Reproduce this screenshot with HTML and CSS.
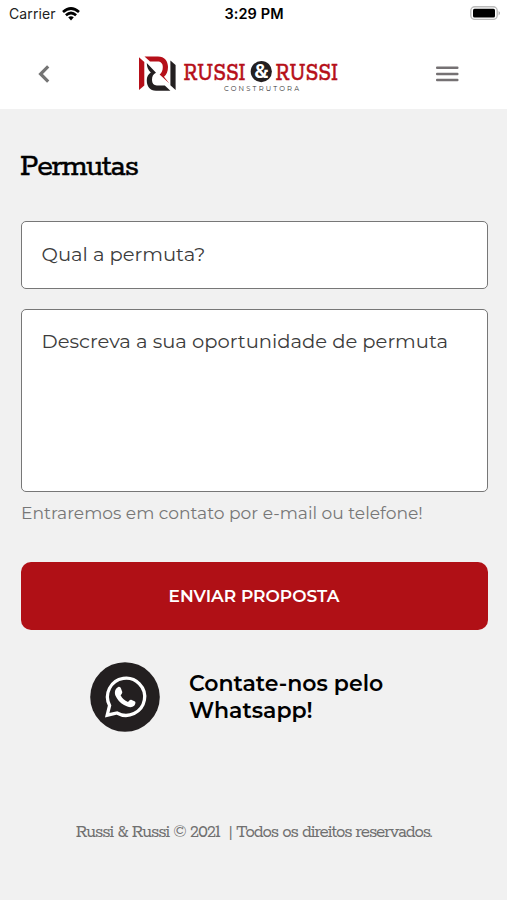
FILE: index.html
```html
<!DOCTYPE html>
<html lang="pt-BR">
<head>
    <meta charset="UTF-8">
    <meta name="viewport" content="width=device-width, initial-scale=1.0">
    <title>Permutas</title>
    <link rel="stylesheet" href="styles.css">
</head>
<body>

    <!-- Status bar -->
    <div class="status-bar">
        <div class="carrier">
            <span>Carrier</span>
            <svg width="18" height="14" viewBox="0 0 18 14" fill="none" stroke="#000" stroke-width="2.7">
                <path d="M1 5 Q9 -2 17 5"/>
                <path d="M3.9 8.2 Q9 3.8 14.1 8.2"/>
                <path d="M6.2 10.3 Q9 8.2 11.8 10.3 L9 13.4 Z" fill="#000" stroke="none"/>
            </svg>
        </div>
        <span class="time">3:29 PM</span>
        <svg class="battery" width="31" height="15" viewBox="0 0 31 15">
            <rect x="0.8" y="0.8" width="26.4" height="12.6" rx="4" fill="#fff" stroke="#bbb" stroke-width="1.4"/>
            <rect x="3" y="2.8" width="22" height="8.6" rx="1.5" fill="#000"/>
            <path d="M28.6 5 Q31.4 7 28.6 9.4 Z" fill="#aaa"/>
        </svg>
    </div>

    <!-- Header -->
    <header class="header">
        <button class="icon-btn" aria-label="Voltar">
            <svg width="12" height="18" viewBox="0 0 12 18" fill="none" stroke="#757575" stroke-width="3.2">
                <path d="M10.2 1.4 L2.6 9 L10.2 16.6"/>
            </svg>
        </button>
        <svg class="logo" width="210" height="40" viewBox="0 0 210 40">
            <path d="M1 3.2 L6.3 8 V31.5 L1 36 Z" fill="#b60f19"/>
            <path d="M6.5 2.4 H20 C26.5 2.4 30 7 30 13 C30 17.5 28.6 20.5 26 22.8 L31.4 29.6 L21.6 20.6 C23.6 19 24.8 16.8 24.8 13 C24.8 9.6 22.8 7.6 19.4 7.6 H12 Z" fill="#b60f19"/>
            <path d="M8.8 9 L18 18.8 C15 20 14 22.6 14 26 C14 29.4 15.8 31.4 18.8 31.4 H26.8 L32.4 36.8 H18 C11.8 36.8 8.8 32.4 8.8 26.5 C8.8 22.8 10.2 20.2 12.8 18.6 C10 15.8 8.8 12.8 8.8 9 Z" fill="#231f20"/>
            <path d="M32.4 6.4 L37.6 11 V36 L32.4 31.2 Z" fill="#231f20"/>
            <text class="logo-name" x="45.5" y="26.2" textLength="62" lengthAdjust="spacingAndGlyphs">RUSSI</text>
            <circle cx="123.3" cy="17.6" r="10.6" fill="#231f20"/>
            <text class="logo-amp" x="123.3" y="24.4" text-anchor="middle">&amp;</text>
            <text class="logo-name" x="137.5" y="26.2" textLength="62.5" lengthAdjust="spacingAndGlyphs">RUSSI</text>
            <text class="logo-sub" x="86" y="36.8" textLength="75">CONSTRUTORA</text>
        </svg>
        <button class="icon-btn" aria-label="Menu">
            <svg width="23" height="16" viewBox="0 0 23 16" fill="#757173">
                <rect x="0" y="0.6" width="22.5" height="2.5" rx="1"/>
                <rect x="0" y="6.7" width="22.5" height="2.5" rx="1"/>
                <rect x="0" y="12.8" width="22.5" height="2.5" rx="1"/>
            </svg>
        </button>
    </header>

    <main class="content">
        <h1>Permutas</h1>

        <form>
            <input class="field" type="text" placeholder="Qual a permuta?">
            <textarea class="field" placeholder="Descreva a sua oportunidade de permuta"></textarea>
            <p class="hint">Entraremos em contato por e-mail ou telefone!</p>
            <button class="submit-btn" type="button">ENVIAR PROPOSTA</button>
        </form>

        <!-- Whatsapp contact -->
        <div class="whatsapp">
            <svg width="70" height="70" viewBox="0 0 70 70">
                <circle cx="35" cy="35" r="34.8" fill="#231f20"/>
                <path d="M17.2 53.2 L19.6 43.4 A18.6 18.6 0 1 1 27 51 Z" fill="none" stroke="#fff" stroke-width="3.3"/>
                <path d="M28.2 25 C29.6 24.4 30.5 25.2 31 26.6 L32.2 29.8 C32.6 31.2 31.6 32.2 30.6 33.3 C32.2 36.4 34.6 38.6 38 40.1 C39.2 39 39.8 37.4 41.2 37.8 L45 39.6 C46 40.2 45.2 42.8 44.2 43.8 C41.4 46.2 37.6 45 34 43 C30.2 40.8 27 37.2 25.4 33.4 C24.2 30.4 25.2 26.4 28.2 25 Z" fill="#fff"/>
            </svg>
            <p>Contate-nos pelo<br><span>Whatsapp!</span></p>
        </div>
    </main>

    <footer>Russi &amp; Russi © 2021&nbsp; | Todos os direitos reservados.</footer>

</body>
</html>
```

FILE: styles.css
```css
* {
    box-sizing: border-box;
}

body {
    margin: 0;
    min-height: 900px;
    background-color: #f1f1f1;
    font-family: Montserrat, Inter, sans-serif;
    color: #000;
}

.status-bar {
    display: grid;
    grid-template-columns: 1fr auto 1fr;
    align-items: center;
    height: 27px;
    padding: 0 6px 0 9px;
    background-color: #fff;
    font-family: Inter, sans-serif;
    font-size: 14px;
}

.carrier {
    display: flex;
    align-items: center;
    gap: 6px;
    color: #222;
    letter-spacing: 0.1px;
}

.time {
    margin-left: -2px;
    font-weight: 600;
    font-size: 14.5px;
    letter-spacing: 0.1px;
}

.battery {
    justify-self: end;
}

.header {
    display: flex;
    justify-content: space-between;
    align-items: center;
    height: 82px;
    padding: 12px 48px 0 38px;
    background-color: #fff;
}

.icon-btn {
    display: flex;
    padding: 0;
    border: none;
    background: none;
}

.logo {
    overflow: visible;
}

.logo-name {
    font-family: Rokkitt, "Zilla Slab", "Roboto Slab", "DejaVu Serif", serif;
    font-size: 26px;
    fill: #b60f19;
    stroke: #b60f19;
    stroke-width: 0.5px;
}

.logo-amp {
    font-family: Rokkitt, "DejaVu Serif", serif;
    font-weight: bold;
    font-size: 23px;
    fill: #fff;
}

.logo-sub {
    font-family: Montserrat, Lato, sans-serif;
    font-size: 6.8px;
    fill: #333;
}

.content {
    padding: 38px 20px 0;
}

h1 {
    margin: 0 0 33px;
    font-family: Rockwell, Rokkitt, "Zilla Slab", "Roboto Slab", "DejaVu Serif", serif;
    font-size: 32px;
    font-weight: normal;
    line-height: 41px;
    letter-spacing: -1.1px;
    -webkit-text-stroke: 0.5px #000;
}

.field {
    display: block;
    width: 467px;
    height: 68px;
    margin: 0 0 20px 0.5px;
    padding: 0 20px 2px;
    border: 1px solid #777;
    border-radius: 5px;
    background-color: #fff;
    font-family: inherit;
    font-size: 19.55px;
    resize: none;
}

.field::placeholder {
    color: #3c3c3c;
    opacity: 1;
}

textarea.field {
    height: 183px;
    margin-bottom: 8px;
    padding-top: 19px;
}

.hint {
    margin: 0 0 37px 1px;
    color: #777;
    font-size: 17.1px;
    line-height: 25px;
}

.submit-btn {
    display: block;
    width: 467px;
    height: 68px;
    margin-left: 0.5px;
    padding: 0 0 1px;
    border: none;
    border-radius: 10px;
    background-color: #b01016;
    color: #fff;
    font-family: inherit;
    font-size: 17px;
    font-weight: 600;
}

.whatsapp {
    display: flex;
    align-items: center;
    gap: 29px;
    margin: 32px 0 0 70px;
}

.whatsapp p {
    margin: 0;
    font-size: 22px;
    font-weight: 600;
    line-height: 27px;
}

footer {
    margin-top: 88px;
    text-align: center;
    font-family: Rockwell, Rokkitt, "Zilla Slab", "Roboto Slab", "DejaVu Serif", serif;
    font-size: 18.8px;
    line-height: 26px;
    letter-spacing: -1.1px;
    color: #707070;
}
```
